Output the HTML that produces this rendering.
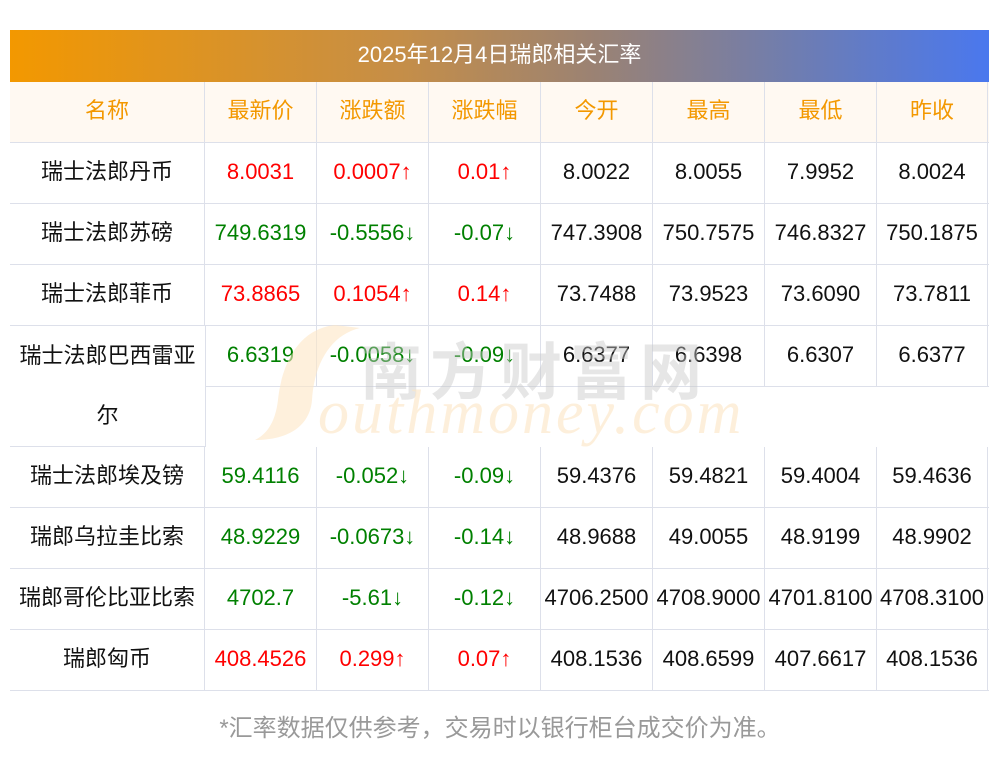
<!DOCTYPE html>
<html><head><meta charset="utf-8"><style>
*{margin:0;padding:0;box-sizing:border-box}
body{width:1000px;height:757px;background:#fff;position:relative;overflow:hidden;font-family:"Liberation Sans","Noto Sans CJK SC",sans-serif;font-size:22px;color:#111}
.title{position:absolute;left:10px;top:30px;width:979px;height:52px;background:linear-gradient(90deg,#f39800,#c58e48 40%,#9a8274 60%,#6f7db0 80%,#4a78ee);color:#fff;font-size:22px;text-align:center;line-height:50px}
.row{position:absolute;left:10px;width:979px;height:61px;display:flex;border-bottom:1px solid #dde0ea}
.row div{height:60px;line-height:58px;text-align:center;border-right:1px solid #dde0ea;white-space:nowrap}
.row div:first-child{width:195px}
.row div{width:112px}
.row div:last-child{width:111px}
.hd{background:#fff9f2;color:#f39800}
.r{color:#f00}.g{color:#008000}
.wm{position:absolute;pointer-events:none}
.foot{position:absolute;top:708px;left:0;width:1000px;text-align:center;color:#999;font-size:24px}
</style></head><body>
<div class="title">2025年12月4日瑞郎相关汇率</div>
<div class="row hd" style="top:82px"><div>名称</div><div>最新价</div><div>涨跌额</div><div>涨跌幅</div><div>今开</div><div>最高</div><div>最低</div><div>昨收</div></div>
<div class="row" style="top:143px"><div>瑞士法郎丹币</div><div class="r">8.0031</div><div class="r">0.0007↑</div><div class="r">0.01↑</div><div>8.0022</div><div>8.0055</div><div>7.9952</div><div>8.0024</div></div>
<div class="row" style="top:204px"><div>瑞士法郎苏磅</div><div class="g">749.6319</div><div class="g">-0.5556↓</div><div class="g">-0.07↓</div><div>747.3908</div><div>750.7575</div><div>746.8327</div><div>750.1875</div></div>
<div class="row" style="top:265px"><div>瑞士法郎菲币</div><div class="r">73.8865</div><div class="r">0.1054↑</div><div class="r">0.14↑</div><div>73.7488</div><div>73.9523</div><div>73.6090</div><div>73.7811</div></div>
<div class="row" style="top:326px;left:205px;width:784px"><div class="g" style="width:112px">6.6319</div><div class="g">-0.0058↓</div><div class="g">-0.09↓</div><div>6.6377</div><div>6.6398</div><div>6.6307</div><div style="width:111px">6.6377</div></div>
<div style="position:absolute;left:10px;top:326px;width:196px;height:121px;border-right:1px solid #dde0ea;border-bottom:1px solid #dde0ea;text-align:center;line-height:60px">瑞士法郎巴西雷亚<br>尔</div>
<div class="wm" style="left:250px;top:320px"><svg width="120" height="130"><path d="M85 5 C40 10 30 60 28 80 C25 105 15 115 5 120 C40 120 60 105 62 80 C64 45 80 15 110 8 Z" fill="#fde6c4" opacity="0.6"/></svg></div>
<div class="wm" style="left:360px;top:322px;font-size:62px;color:#c8c8c8;opacity:0.45;letter-spacing:8px;font-weight:bold">南方财富网</div>
<div class="wm" style="left:318px;top:378px;font-size:62px;color:#fde6c4;opacity:0.6;font-style:italic;font-family:'Liberation Serif',serif;letter-spacing:3px">outhmoney.com</div>
<div class="row" style="top:447px"><div>瑞士法郎埃及镑</div><div class="g">59.4116</div><div class="g">-0.052↓</div><div class="g">-0.09↓</div><div>59.4376</div><div>59.4821</div><div>59.4004</div><div>59.4636</div></div>
<div class="row" style="top:508px"><div>瑞郎乌拉圭比索</div><div class="g">48.9229</div><div class="g">-0.0673↓</div><div class="g">-0.14↓</div><div>48.9688</div><div>49.0055</div><div>48.9199</div><div>48.9902</div></div>
<div class="row" style="top:569px"><div>瑞郎哥伦比亚比索</div><div class="g">4702.7</div><div class="g">-5.61↓</div><div class="g">-0.12↓</div><div>4706.2500</div><div>4708.9000</div><div>4701.8100</div><div>4708.3100</div></div>
<div class="row" style="top:630px"><div>瑞郎匈币</div><div class="r">408.4526</div><div class="r">0.299↑</div><div class="r">0.07↑</div><div>408.1536</div><div>408.6599</div><div>407.6617</div><div>408.1536</div></div>
<div class="foot">*汇率数据仅供参考，交易时以银行柜台成交价为准。</div>
</body></html>
